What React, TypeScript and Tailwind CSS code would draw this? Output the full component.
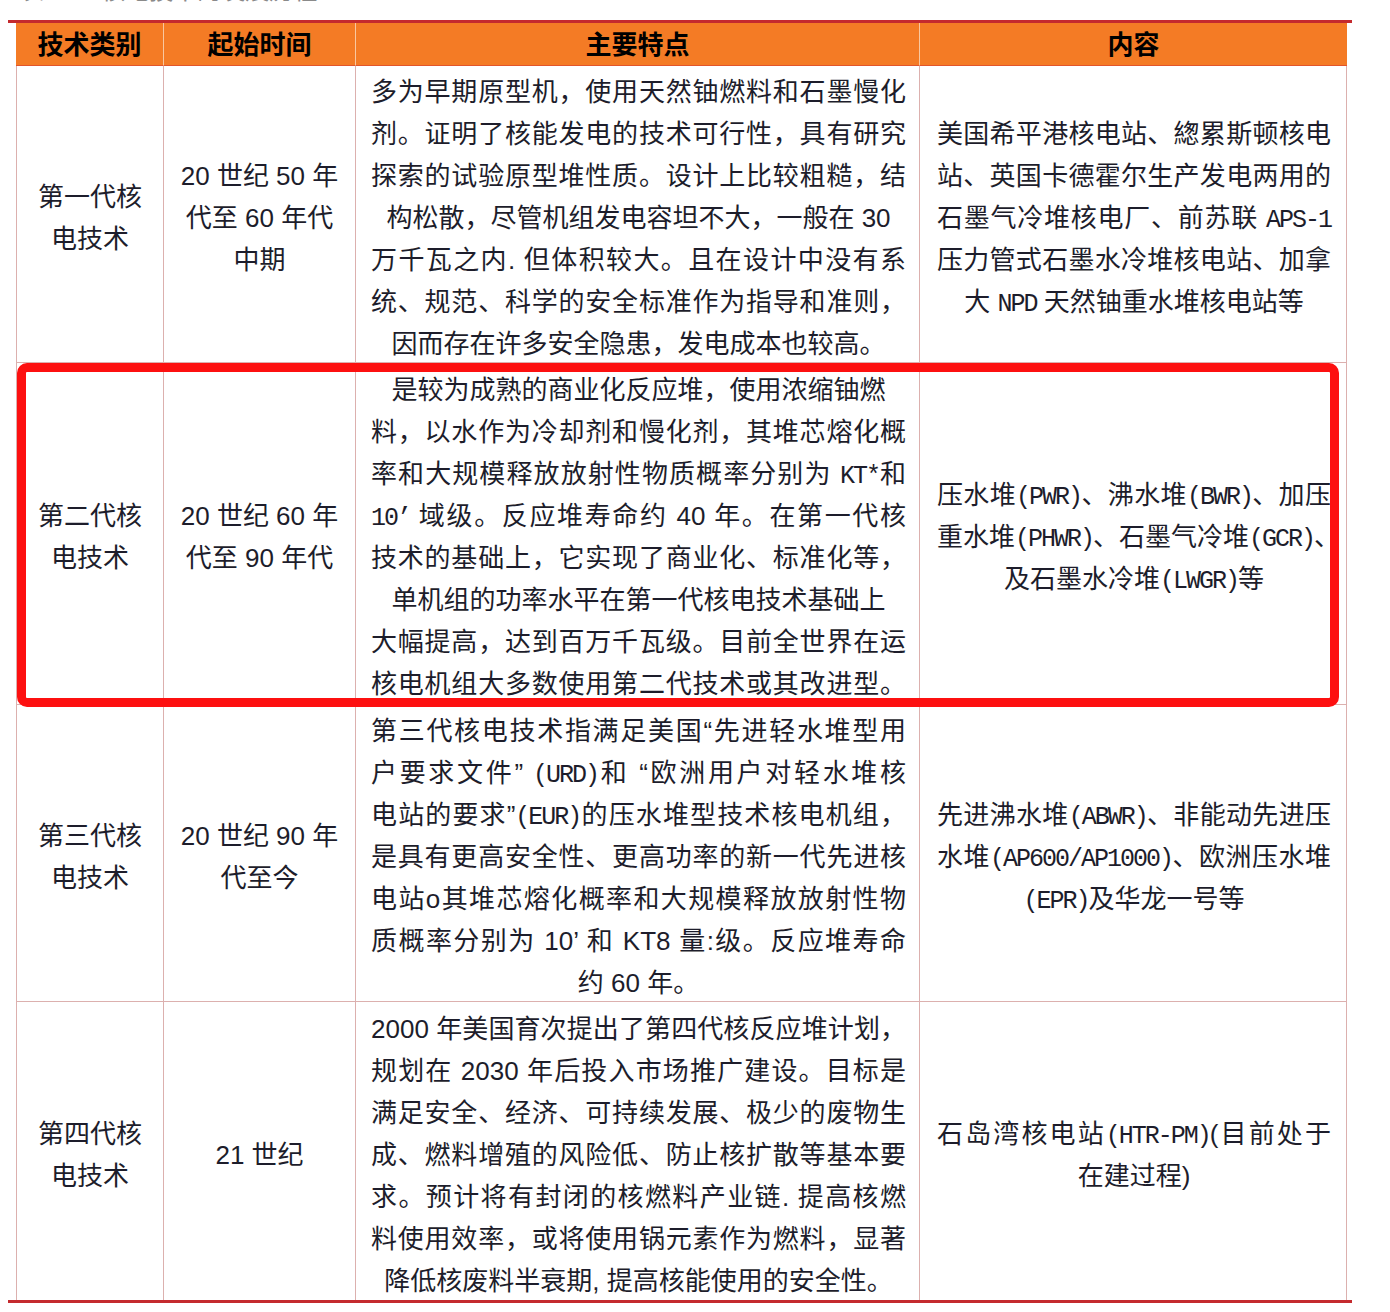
import React from 'react';

const FONT = '"Liberation Sans", "Noto Sans CJK SC", sans-serif';

// half-width latin in the source doc (SimSun style) – narrow mono
function M({ children }: { children: React.ReactNode }) {
  return (
    <span className="text-[25px] tracking-[-2px] leading-none" style={{ fontFamily: '"Liberation Mono", "Noto Sans CJK SC", monospace' }}>
      {children}
    </span>
  );
}

function Line({ j, children }: { j?: boolean; children: React.ReactNode }) {
  return (
    <div className={j ? 'h-[42px] text-justify [text-align-last:justify] whitespace-nowrap' : 'h-[42px] text-center whitespace-nowrap'}>
      {children}
    </div>
  );
}

interface Row {
  h: string;
  name: string[];
  time: string[];
  features: React.ReactNode;
  content: React.ReactNode;
}

const rows: Row[] = [
  {
    h: 'h-[297px]',
    name: ['第一代核', '电技术'],
    time: ['20 世纪 50 年', '代至 60 年代', '中期'],
    features: (
      <>
        <Line j>多为早期原型机，使用天然铀燃料和石墨慢化</Line>
        <Line j>剂。证明了核能发电的技术可行性，具有研究</Line>
        <Line j>探索的试验原型堆性质。设计上比较粗糙，结</Line>
        <Line>构松散，尽管机组发电容坦不大，一般在 30</Line>
        <Line j>万千瓦之内. 但体积较大。且在设计中没有系</Line>
        <Line j>统、规范、科学的安全标准作为指导和准则，</Line>
        <Line>因而存在许多安全隐患，发电成本也较高。</Line>
      </>
    ),
    content: (
      <>
        <Line j>美国希平港核电站、緫累斯顿核电</Line>
        <Line j>站、英国卡德霍尔生产发电两用的</Line>
        <Line j>石墨气冷堆核电厂、前苏联 <M>APS-1</M></Line>
        <Line j>压力管式石墨水冷堆核电站、加拿</Line>
        <Line>大 <M>NPD</M> 天然铀重水堆核电站等</Line>
      </>
    ),
  },
  {
    h: 'h-[342px]',
    name: ['第二代核', '电技术'],
    time: ['20 世纪 60 年', '代至 90 年代'],
    features: (
      <>
        <Line>是较为成熟的商业化反应堆，使用浓缩铀燃</Line>
        <Line j>料，以水作为冷却剂和慢化剂，其堆芯熔化概</Line>
        <Line j>率和大规模释放放射性物质概率分别为 <M>KT*</M>和</Line>
        <Line j><M>10’</M> 域级。反应堆寿命约 40 年。在第一代核</Line>
        <Line j>技术的基础上，它实现了商业化、标准化等，</Line>
        <Line>单机组的功率水平在第一代核电技术基础上</Line>
        <Line j>大幅提高，达到百万千瓦级。目前全世界在运</Line>
        <Line j>核电机组大多数使用第二代技术或其改进型。</Line>
      </>
    ),
    content: (
      <>
        <Line j>压水堆<M>(PWR)</M>、沸水堆<M>(BWR)</M>、加压</Line>
        <Line j>重水堆<M>(PHWR)</M>、石墨气冷堆<M>(GCR)</M>、</Line>
        <Line>及石墨水冷堆<M>(LWGR)</M>等</Line>
      </>
    ),
  },
  {
    h: 'h-[297px]',
    name: ['第三代核', '电技术'],
    time: ['20 世纪 90 年', '代至今'],
    features: (
      <>
        <Line j>第三代核电技术指满足美国“先进轻水堆型用</Line>
        <Line j>户要求文件” <M>(URD)</M>和 “欧洲用户对轻水堆核</Line>
        <Line j>电站的要求”<M>(EUR)</M>的压水堆型技术核电机组，</Line>
        <Line j>是具有更高安全性、更高功率的新一代先进核</Line>
        <Line j>电站o其堆芯熔化概率和大规模释放放射性物</Line>
        <Line j>质概率分别为 10’ 和 KT8 量:级。反应堆寿命</Line>
        <Line>约 60 年。</Line>
      </>
    ),
    content: (
      <>
        <Line j>先进沸水堆<M>(ABWR)</M>、非能动先进压</Line>
        <Line j>水堆<M>(AP600/AP1000)</M>、欧洲压水堆</Line>
        <Line><M>(EPR)</M>及华龙一号等</Line>
      </>
    ),
  },
  {
    h: 'h-[298px]',
    name: ['第四代核', '电技术'],
    time: ['21 世纪'],
    features: (
      <>
        <Line j>2000 年美国育次提出了第四代核反应堆计划，</Line>
        <Line j>规划在 2030 年后投入市场推广建设。目标是</Line>
        <Line j>满足安全、经济、可持续发展、极少的废物生</Line>
        <Line j>成、燃料增殖的风险低、防止核扩散等基本要</Line>
        <Line j>求。预计将有封闭的核燃料产业链. 提高核燃</Line>
        <Line j>料使用效率，或将使用锅元素作为燃料，显著</Line>
        <Line>降低核废料半衰期, 提高核能使用的安全性。</Line>
      </>
    ),
    content: (
      <>
        <Line j>石岛湾核电站<M>(HTR-PM)</M>(目前处于</Line>
        <Line>在建过程)</Line>
      </>
    ),
  },
];

const headers = ['技术类别', '起始时间', '主要特点', '内容'];

export default function App() {
  return (
    <div className="relative w-[1390px] h-[1312px] overflow-hidden bg-white text-[26px] text-[#1d1d2b]" style={{ fontFamily: FONT }}>
      {/* caption above the table, mostly scrolled off the top in the source */}
      <div className="h-[20px] overflow-hidden">
        <div className="-mt-[24px] pl-[20px] text-[24px] leading-[30px] text-[#8a8a8a]">表 1：&nbsp;&nbsp;核电技术的发展历程</div>
      </div>

      <div className="ml-[8px] w-[1344px] h-[3px] bg-[#c42a2e]" />

      <div className="ml-[16px] w-[1331px] grid grid-cols-[148px_192px_564px_427px]">
        {headers.map((t, i) => (
          <div
            key={t}
            className={
              i < 3
                ? 'h-[43px] pt-[2px] flex items-center justify-center bg-[#f47b25] border-r border-b border-r-[#f9c7a0] border-b-[#e2552b] font-bold text-black'
                : 'h-[43px] pt-[2px] flex items-center justify-center bg-[#f47b25] border-b border-b-[#e2552b] font-bold text-black'
            }
          >
            {t}
          </div>
        ))}

        {rows.map((r, idx) => {
          const last = idx === rows.length - 1;
          const bb = last ? '' : 'border-b';
          return (
            <React.Fragment key={idx}>
              <div className={`${r.h} ${bb} pt-[7px] border-l border-r border-[#dcb0ae] flex flex-col justify-center items-center leading-[42px]`}>
                {r.name.map((s) => (
                  <div key={s}>{s}</div>
                ))}
              </div>
              <div className={`${r.h} ${bb} pt-[7px] border-r border-[#dcb0ae] flex flex-col justify-center items-center leading-[42px]`}>
                {r.time.map((s) => (
                  <div key={s}>{s}</div>
                ))}
              </div>
              <div className={`${r.h} ${bb} pt-[7px] border-r border-[#dcb0ae] flex flex-col justify-center pl-[15px] pr-[13px] leading-[42px]`}>
                {r.features}
              </div>
              <div className={`${r.h} ${bb} pt-[7px] border-r border-[#dcb0ae] flex flex-col justify-center pl-[17px] pr-[15px] leading-[42px]`}>
                {r.content}
              </div>
            </React.Fragment>
          );
        })}
      </div>

      <div className="ml-[8px] w-[1344px] h-[3px] bg-[#c42a2e]" />

      {/* red highlight annotation around the second generation row */}
      <div className="absolute left-[17px] top-[363px] w-[1322px] h-[344px] border-[9px] border-[#fd1010] rounded-[10px] pointer-events-none" />
    </div>
  );
}
